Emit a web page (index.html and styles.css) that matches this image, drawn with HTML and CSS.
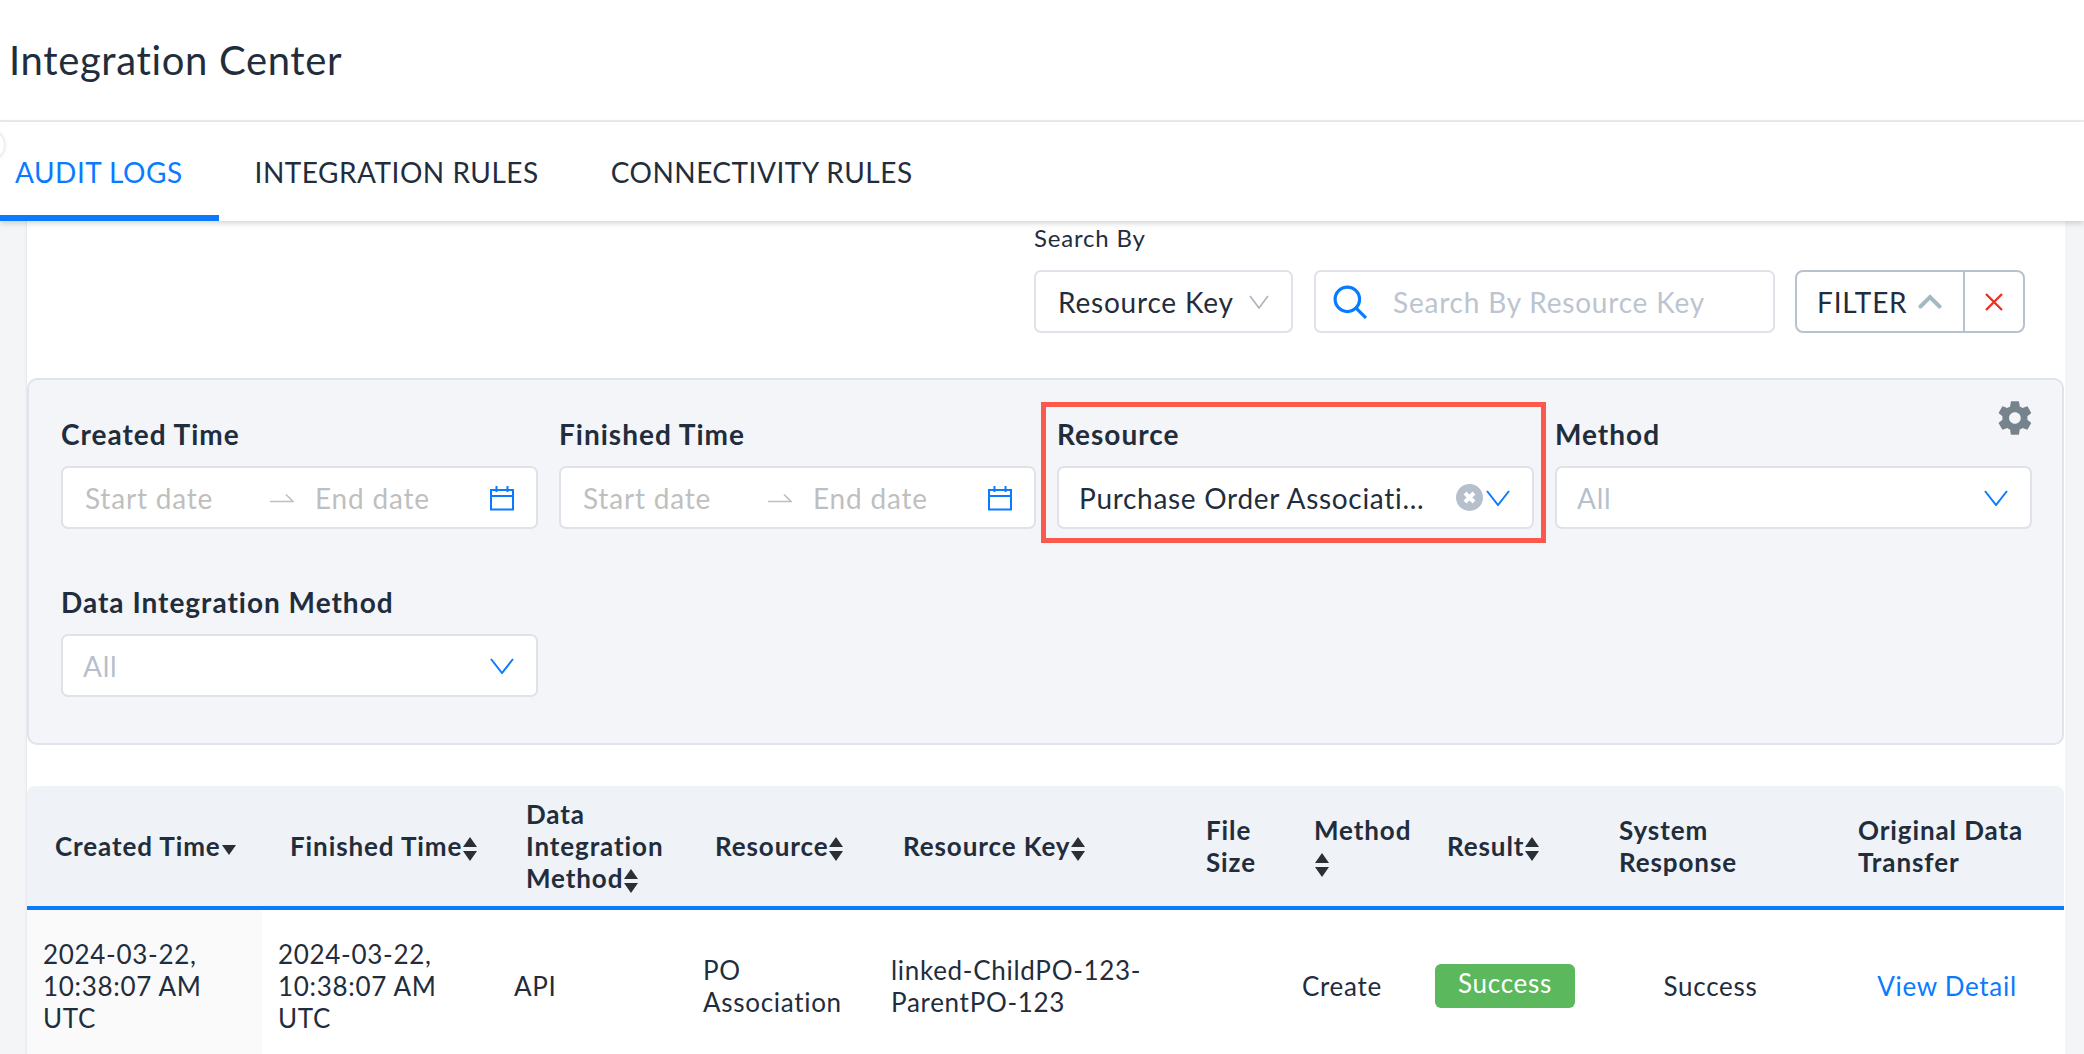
FILE: index.html
```html
<!DOCTYPE html>
<html lang="en">

<head>
    <meta charset="UTF-8">
    <title>Integration Center</title>
    <link rel="stylesheet" href="styles.css">
</head>

<body>
    <header class="title-bar">
        <h1>Integration Center</h1>
    </header>
    <nav class="tabs">
        <a class="tab active">AUDIT LOGS</a>
        <a class="tab">INTEGRATION RULES</a>
        <a class="tab">CONNECTIVITY RULES</a>
        <span class="collapse-dot"></span>
    </nav>

    <main class="content">
        <div class="search-row">
            <div class="search-by">
                <label>Search By</label>
                <div class="box key-select">
                    <span>Resource Key</span>
                    <svg class="chev-grey" viewBox="0 0 20 14"><path d="M1 1l9 12 9-12" /></svg>
                </div>
            </div>
            <div class="box search-input">
                <svg class="search-icon" viewBox="0 0 32 32"><circle cx="13.5" cy="13.5" r="11.5" /><path d="M22 22l9 9" /></svg>
                <span class="placeholder">Search By Resource Key</span>
            </div>
            <div class="filter-btn">
                <div class="filter-main">
                    <span>FILTER</span>
                    <svg class="chev-up" viewBox="0 0 24 15"><path d="M2.5 12.5L12 3l9.5 9.5" /></svg>
                </div>
                <div class="filter-clear">
                    <svg class="red-x" viewBox="0 0 18 18"><path d="M1 1l16 16M17 1L1 17" /></svg>
                </div>
            </div>
        </div>

        <section class="filter-panel">
            <svg class="gear" viewBox="0 0 24 24"><path d="M19.4 13c.04-.33.1-.66.1-1s-.06-.67-.1-1l2.1-1.65c.19-.15.24-.42.12-.64l-2-3.46c-.12-.22-.39-.3-.61-.22l-2.49 1c-.52-.4-1.08-.73-1.69-.98l-.38-2.65C14.41 2.18 14.2 2 13.95 2h-4c-.25 0-.46.18-.49.42l-.38 2.65c-.61.25-1.17.59-1.69.98l-2.49-1c-.23-.09-.49 0-.61.22l-2 3.46c-.13.22-.07.49.12.64L4.5 11c-.04.33-.1.67-.1 1s.06.67.1 1l-2.1 1.65c-.19.15-.25.42-.12.64l2 3.46c.12.22.39.3.61.22l2.49-1c.52.4 1.08.73 1.69.98l.38 2.65c.03.24.24.42.49.42h4c.25 0 .46-.18.49-.42l.38-2.65c.61-.25 1.17-.59 1.69-.98l2.49 1c.23.09.49 0 .61-.22l2-3.46c.12-.22.07-.49-.12-.64L19.4 13zM11.95 15.5c-1.93 0-3.5-1.57-3.5-3.5s1.57-3.5 3.5-3.5 3.5 1.57 3.5 3.5-1.57 3.5-3.5 3.5z" /></svg>
            <div class="field">
                <label>Created Time</label>
                <div class="box date-range">
                    <span class="date-from">Start date</span>
                    <svg class="swap" viewBox="0 0 24 10"><path d="M0 8.5h23L16 1.5" /></svg>
                    <span class="date-to">End date</span>
                    <svg class="cal" viewBox="0 0 26 26"><path d="M2 5h22v19.5H2zM2 11h22M7.5 1v6M18.5 1v6" /></svg>
                </div>
            </div>
            <div class="field">
                <label>Finished Time</label>
                <div class="box date-range">
                    <span class="date-from">Start date</span>
                    <svg class="swap" viewBox="0 0 24 10"><path d="M0 8.5h23L16 1.5" /></svg>
                    <span class="date-to">End date</span>
                    <svg class="cal" viewBox="0 0 26 26"><path d="M2 5h22v19.5H2zM2 11h22M7.5 1v6M18.5 1v6" /></svg>
                </div>
            </div>
            <div class="field marked">
                <label>Resource</label>
                <div class="box select">
                    <span class="select-value">Purchase Order Associati...</span>
                    <svg class="clear" viewBox="0 0 27 27"><circle cx="13.5" cy="13.5" r="13.5" /><path d="M9 9l9 9M18 9l-9 9" /></svg>
                    <svg class="chev" viewBox="0 0 24 16"><path d="M1 1l11 14L23 1" /></svg>
                </div>
            </div>
            <div class="field">
                <label>Method</label>
                <div class="box select">
                    <span class="select-empty">All</span>
                    <svg class="chev" viewBox="0 0 24 16"><path d="M1 1l11 14L23 1" /></svg>
                </div>
            </div>
            <div class="field">
                <label>Data Integration Method</label>
                <div class="box select">
                    <span class="select-empty">All</span>
                    <svg class="chev" viewBox="0 0 24 16"><path d="M1 1l11 14L23 1" /></svg>
                </div>
            </div>
        </section>

        <table class="log-table">
            <colgroup>
                <col class="c1"><col class="c2"><col class="c3"><col class="c4"><col class="c5">
                <col class="c6"><col class="c7"><col class="c8"><col class="c9"><col class="c10">
            </colgroup>
            <thead>
                <tr>
                    <th>Created Time<svg class="sort" viewBox="0 0 16 26"><path d="M1 9h14l-7 10z" /></svg></th>
                    <th>Finished Time<svg class="sort" viewBox="0 0 16 26"><path d="M8 1l7 10H1zM1 15h14l-7 10z" /></svg></th>
                    <th>Data Integration Method<svg class="sort" viewBox="0 0 16 26"><path d="M8 1l7 10H1zM1 15h14l-7 10z" /></svg></th>
                    <th>Resource<svg class="sort" viewBox="0 0 16 26"><path d="M8 1l7 10H1zM1 15h14l-7 10z" /></svg></th>
                    <th>Resource Key<svg class="sort" viewBox="0 0 16 26"><path d="M8 1l7 10H1zM1 15h14l-7 10z" /></svg></th>
                    <th>File Size</th>
                    <th>Method <svg class="sort" viewBox="0 0 16 26"><path d="M8 1l7 10H1zM1 15h14l-7 10z" /></svg></th>
                    <th>Result<svg class="sort" viewBox="0 0 16 26"><path d="M8 1l7 10H1zM1 15h14l-7 10z" /></svg></th>
                    <th>System Response</th>
                    <th>Original Data Transfer</th>
                </tr>
            </thead>
            <tbody>
                <tr>
                    <td class="sorted">2024-03-22, 10:38:07 AM UTC</td>
                    <td>2024-03-22, 10:38:07 AM UTC</td>
                    <td>API</td>
                    <td>PO Association</td>
                    <td>linked-ChildPO-123-ParentPO-123</td>
                    <td></td>
                    <td>Create</td>
                    <td><span class="badge">Success</span></td>
                    <td class="center">Success</td>
                    <td class="center"><a class="link">View Detail</a></td>
                </tr>
            </tbody>
        </table>
    </main>
</body>

</html>
```
FILE: styles.css
```css
*,
*::after {
    box-sizing: border-box;
}

html,
body {
    height: 100%;
}

body {
    margin: 0;
    overflow: hidden;
    background: #f4f5f7;
    color: #1f2d3d;
    font-family: "Lato", "Open Sans", sans-serif;
    font-size: 28px;
    letter-spacing: 0.8px;
    font-variant-ligatures: none;
}

.title-bar {
    height: 122px;
    background: #fff;
    padding-left: 9px;
    display: flex;
    align-items: center;
    border-bottom: 2px solid #eeeeee;
}

h1 {
    margin: 0;
    font-size: 40px;
    font-weight: 400;
    letter-spacing: 0.65px;
}

.tabs {
    position: relative;
    z-index: 2;
    height: 99px;
    background: #fff;
    display: flex;
    box-shadow: 0 2px 6px rgba(0, 0, 0, 0.18);
}

.tab {
    padding: 0 36px;
    line-height: 100px;
    font-size: 28px;
    letter-spacing: 0.5px;
    height: 99px;
}

.tab.active {
    padding-left: 15px;
    color: #0a7bff;
    border-bottom: 6px solid #0a7bff;
}

.collapse-dot {
    position: absolute;
    left: -26px;
    top: 8px;
    width: 30px;
    height: 30px;
    border-radius: 50%;
    background: #fff;
    box-shadow: 0 0 4px rgba(0, 0, 0, 0.2);
}

.content {
    height: 933px;
    margin: 0 19px 0 27px;
    background: #fff;
    overflow: hidden;
    box-shadow: -1px 0 2px rgba(0, 0, 0, 0.06);
}

label {
    display: block;
}

.box {
    height: 63px;
    background: #fff;
    border: 2px solid #dfe2e8;
    border-radius: 7px;
    display: flex;
    align-items: center;
}

.search-row {
    height: 157px;
    padding: 0 40px 45px 0;
    display: flex;
    justify-content: flex-end;
    align-items: flex-end;
}

.search-by label {
    font-size: 24px;
    line-height: 36px;
    margin-bottom: 14px;
}

.key-select {
    width: 259px;
    padding: 0 22px;
    justify-content: space-between;
}

.chev-grey {
    width: 20px;
    height: 14px;
    fill: none;
    stroke: #a9b4bd;
    stroke-width: 1.6;
}

.search-input {
    width: 461px;
    margin-left: 21px;
    padding-left: 17px;
}

.search-icon {
    width: 34px;
    height: 34px;
    fill: none;
    stroke: #0a7bff;
    stroke-width: 3;
    margin-right: 26px;
}

.placeholder {
    color: #bcc4cf;
}

.filter-btn {
    width: 230px;
    height: 63px;
    margin-left: 20px;
    border: 2px solid #b8c2cf;
    border-radius: 8px;
    display: flex;
}

.filter-main {
    width: 168px;
    padding-left: 20px;
    display: flex;
    align-items: center;
    border-right: 2px solid #b8c2cf;
}

.chev-up {
    width: 24px;
    height: 15px;
    margin-left: 11px;
    fill: none;
    stroke: #a3bac3;
    stroke-width: 4;
    stroke-linecap: round;
}

.filter-clear {
    flex: 1;
    display: flex;
    align-items: center;
    justify-content: center;
}

.red-x {
    width: 18px;
    height: 18px;
    fill: none;
    stroke: #ee2f24;
    stroke-width: 2.4;
}

.filter-panel {
    position: relative;
    height: 367px;
    margin-right: 1px;
    padding: 34px 32px 0;
    background: #f4f5f9;
    border: 2px solid #dfe3eb;
    border-radius: 10px;
    display: grid;
    grid-template-columns: repeat(4, 477px);
    grid-auto-rows: 168px;
    column-gap: 21px;
    align-content: start;
}

.gear {
    position: absolute;
    right: 27px;
    top: 18px;
    width: 40px;
    height: 40px;
    fill: #76828c;
}

.field {
    position: relative;
}

.field label {
    font-weight: 700;
    letter-spacing: 1px;
    line-height: 40px;
    margin-bottom: 12px;
}

.field.marked::after {
    content: "";
    position: absolute;
    left: -16px;
    top: -12px;
    width: 505px;
    height: 141px;
    border: 5px solid #fb594c;
    pointer-events: none;
}

.date-range,
.select {
    padding: 0 0 0 22px;
    position: relative;
}

.date-from,
.date-to {
    color: #bfbfbf;
    width: 185px;
}

.swap {
    width: 24px;
    height: 10px;
    margin-right: 21px;
    fill: none;
    stroke: #bfbfbf;
    stroke-width: 1.6;
}

.date-to {
    width: 174px;
}

.cal {
    width: 26px;
    height: 26px;
    fill: none;
    stroke: #0a7bff;
    stroke-width: 2;
}

.select {
    justify-content: flex-end;
    padding-left: 20px;
    padding-right: 22px;
}

.select-value {
    margin-right: auto;
    letter-spacing: 0.7px;
}

.select-empty {
    margin-right: auto;
    color: #b7bfcc;
}

.clear {
    width: 27px;
    height: 27px;
    margin-right: 3px;
    fill: #b6bfcc;
    stroke: none;
}

.clear path {
    stroke: #fff;
    stroke-width: 4;
}

.chev {
    width: 24px;
    height: 16px;
    fill: none;
    stroke: #0a7bff;
    stroke-width: 2;
}

.log-table {
    width: 2037px;
    margin-top: 41px;
    table-layout: fixed;
    border-collapse: separate;
    border-spacing: 0;
    font-size: 26px;
    letter-spacing: 0.7px;
}

.c1 { width: 235px; }
.c2 { width: 236px; }
.c3 { width: 189px; }
.c4 { width: 188px; }
.c5 { width: 303px; }
.c6 { width: 108px; }
.c7 { width: 133px; }
.c8 { width: 172px; }
.c9 { width: 239px; }
.c10 { width: 234px; }

th {
    height: 124px;
    padding: 12px 14px 12px 28px;
    background: #eff2f6;
    border-bottom: 4px solid #0a7bff;
    text-align: left;
    font-weight: 700;
    letter-spacing: 0.9px;
    line-height: 32px;
}

th:first-child {
    border-top-left-radius: 8px;
}

th:last-child {
    border-top-right-radius: 8px;
}

.sort {
    width: 16px;
    height: 26px;
    vertical-align: middle;
    fill: #2b2f36;
}

td {
    padding: 28px 16px;
    line-height: 32px;
    vertical-align: middle;
}

td.sorted {
    background: #fafafa;
}

td.center {
    text-align: center;
}

.badge {
    display: block;
    width: 140px;
    height: 44px;
    line-height: 38px;
    border-radius: 6px;
    background: #5cb85c;
    color: #fff;
    text-align: center;
}

.link {
    color: #0a7bff;
}
```
